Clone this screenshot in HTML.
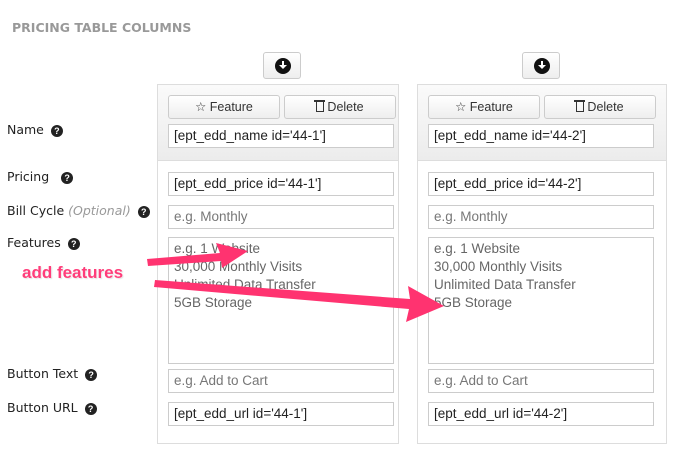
<!DOCTYPE html>
<html><head><style>
*{box-sizing:border-box;margin:0;padding:0}
body{width:681px;height:453px;background:#fff;position:relative;overflow:hidden;font-family:"Liberation Sans",sans-serif}
.a{position:absolute}
.lbl{position:absolute;left:7px;color:#222;font-family:"DejaVu Sans","Liberation Sans",sans-serif;font-size:12.5px}
.q{display:inline-block;width:12px;height:12px;border-radius:50%;background:#222;color:#fff;font-size:9px;font-weight:bold;text-align:center;line-height:12px;vertical-align:0px;margin-left:7px;font-family:"Liberation Sans",sans-serif}
.col{position:absolute;top:84px;height:360px;border:1px solid #ddd;background:#fff}
.hd{position:absolute;left:0;top:0;right:0;height:76px;background:linear-gradient(#fafafa,#ececec);border-bottom:1px solid #ddd}
.btn{position:absolute;height:24px;border:1px solid #ccc;border-radius:3px;background:linear-gradient(#fff,#eee);font-size:12.5px;color:#333;text-align:center;line-height:22px}
.in{position:absolute;height:24px;border:1px solid #ccc;background:#fff;font-size:13.5px;color:#222;padding-left:5px;line-height:22px;white-space:nowrap}
.ph{color:#777}
.ta{position:absolute;border:1px solid #ccc;background:#fff;font-size:13.5px;color:#666;padding:2px 5px;line-height:18px}
.dl{position:absolute;top:52px;width:38px;height:27px;border:1px solid #ccc;border-radius:3px;background:linear-gradient(#fff,#eee)}
.dl i{position:absolute;left:11px;top:5px;width:16px;height:16px;border-radius:50%;background:#111}
.dl i:after{content:"";position:absolute;left:4px;top:7px;border:4px solid transparent;border-top:4px solid #fff}
.dl i:before{content:"";position:absolute;left:7px;top:3px;width:2px;height:5px;background:#fff}
.tr{display:inline-block;width:8px;height:10px;border:1.5px solid #333;border-top:none;vertical-align:-1px;position:relative;margin-right:3px}
.tr:before{content:"";position:absolute;left:-3px;top:-2px;width:11px;height:1.5px;background:#333}
</style></head><body>
<div class="a" style="left:12px;top:20px;font-size:12.5px;font-weight:bold;color:#999;font-family:'DejaVu Sans',sans-serif">PRICING TABLE COLUMNS</div>

<div class="lbl" style="top:122px">Name<span class="q">?</span></div>
<div class="lbl" style="top:169px">Pricing <span class="q" style="margin-left:8px">?</span></div>
<div class="lbl" style="top:203px">Bill Cycle <i style="color:#999">(Optional)</i><span class="q">?</span></div>
<div class="lbl" style="top:235px">Features<span class="q">?</span></div>
<div class="lbl" style="top:366px">Button Text<span class="q">?</span></div>
<div class="lbl" style="top:400px">Button URL<span class="q">?</span></div>

<div class="dl" style="left:263px"><i></i></div>
<div class="dl" style="left:522px"><i></i></div>

<div class="col" style="left:157px;width:242px"><div class="hd"></div></div>
<div class="col" style="left:417px;width:250px"><div class="hd"></div></div>

<div class="btn" style="left:168px;top:95px;width:112px">☆ Feature</div>
<div class="btn" style="left:284px;top:95px;width:112px"><span class="tr"></span>Delete</div>
<div class="in" style="left:168px;top:124px;width:226px">[ept_edd_name id='44-1']</div>
<div class="in" style="left:168px;top:172px;width:226px">[ept_edd_price id='44-1']</div>
<div class="in ph" style="left:168px;top:205px;width:226px">e.g. Monthly</div>
<div class="ta" style="left:168px;top:237px;width:226px;height:127px">e.g. 1 Website<br>30,000 Monthly Visits<br>Unlimited Data Transfer<br>5GB Storage</div>
<div class="in ph" style="left:168px;top:369px;width:226px">e.g. Add to Cart</div>
<div class="in" style="left:168px;top:402px;width:226px">[ept_edd_url id='44-1']</div>

<div class="btn" style="left:428px;top:95px;width:112px">☆ Feature</div>
<div class="btn" style="left:544px;top:95px;width:112px"><span class="tr"></span>Delete</div>
<div class="in" style="left:428px;top:124px;width:226px">[ept_edd_name id='44-2']</div>
<div class="in" style="left:428px;top:172px;width:226px">[ept_edd_price id='44-2']</div>
<div class="in ph" style="left:428px;top:205px;width:226px">e.g. Monthly</div>
<div class="ta" style="left:428px;top:237px;width:226px;height:127px">e.g. 1 Website<br>30,000 Monthly Visits<br>Unlimited Data Transfer<br>5GB Storage</div>
<div class="in ph" style="left:428px;top:369px;width:226px">e.g. Add to Cart</div>
<div class="in" style="left:428px;top:402px;width:226px">[ept_edd_url id='44-2']</div>

<div class="a" style="left:22px;top:263px;font-size:17px;font-weight:bold;color:#ff3d7a;text-shadow:0 0 2px #fff,1px 1px 1px #ddd">add features</div>
<svg class="a" style="left:0;top:0" width="681" height="453">
<g fill="#ff3370">
<path d="M147 259 L220 253 L216 243 L248 251 L222 268 L221 261 L148 266 Z"/>
<path d="M155 280 L410 299 L408 286 L444 306 L406 322 L409 309 L154 287 Z"/>
</g></svg>
</body></html>
